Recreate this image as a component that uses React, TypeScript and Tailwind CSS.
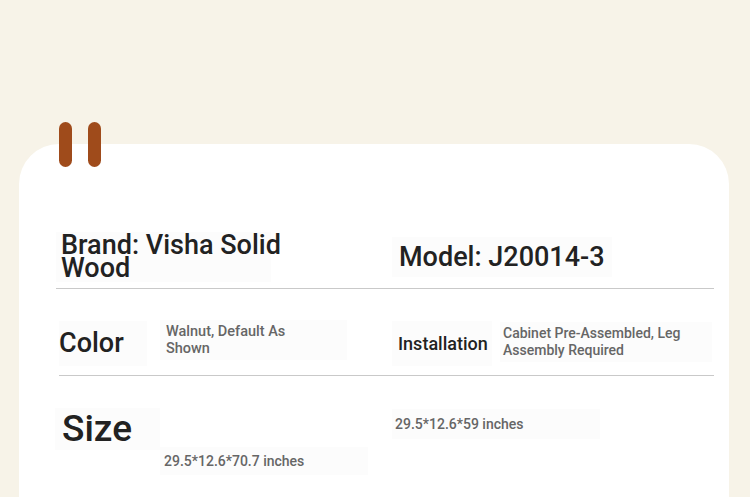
import React from "react";

const specs = {
  brand: "Brand: Visha Solid Wood",
  model: "Model: J20014-3",
  color: "Walnut, Default As Shown",
  installation: "Cabinet Pre-Assembled, Leg Assembly Required",
  sizes: ["29.5*12.6*70.7 inches", "29.5*12.6*59 inches"],
};

const App = () => {
  return (
    <div
      className="w-[750px] h-[497px] overflow-hidden bg-[#f7f3e8] pt-[144px] pl-[19px] pr-[21px]"
      style={{ fontFamily: "Roboto, 'Liberation Sans', sans-serif" }}
    >
      <div className="relative h-[380px] bg-white rounded-t-[40px] pt-[88px]">
        {/* binder tabs */}
        <div className="absolute -top-[22px] left-[40px] flex gap-[16px]">
          <span className="w-[13px] h-[45px] rounded-full bg-[#9f4b1b]" />
          <span className="w-[13px] h-[45px] rounded-full bg-[#9f4b1b]" />
        </div>

        {/* Brand / Model */}
        <div className="ml-[37px] mr-[15px] grid grid-cols-[336px_1fr] items-center border-b border-[#c9c9c9] pb-[6px]">
          <div className="w-[215px] bg-[#fcfcfc] pl-[5px] py-[2px]">
            <p className="w-[228px] text-[27px] leading-[23px] font-medium text-[#222]">{specs.brand}</p>
          </div>
          <div className="w-[220px] bg-[#fcfcfc] px-[7px] py-[6px]">
            <p className="text-[27px] leading-[28px] font-medium text-[#222]">{specs.model}</p>
          </div>
        </div>

        {/* Color / Installation */}
        <div className="ml-[40px] mr-[15px] h-[87px] pt-[22px] grid grid-cols-[333px_1fr] items-center border-b border-[#c9c9c9]">
          <div className="flex items-center gap-[13px]">
            <div className="w-[88px] h-[45px] flex items-center bg-[#fcfcfc]">
              <span className="text-[27px] font-medium text-[#222]">Color</span>
            </div>
            <div className="w-[187px] mb-[6px] bg-[#fcfcfc] px-[6px] py-[3px]">
              <p className="w-[140px] text-[14.5px] leading-[17px] font-medium text-[#666]">{specs.color}</p>
            </div>
          </div>
          <div className="flex items-center gap-[8px]">
            <div className="w-[100px] h-[45px] flex items-center bg-[#fcfcfc] px-[6px]">
              <span className="text-[18px] font-medium text-[#222]">Installation</span>
            </div>
            <div className="w-[212px] mb-[2px] bg-[#fcfcfc] px-[3px] py-[3px]">
              <p className="text-[14px] leading-[17px] font-medium text-[#666]">{specs.installation}</p>
            </div>
          </div>
        </div>

        {/* Size */}
        <div className="ml-[36px] mr-[15px] grid grid-cols-[337px_1fr] pt-[32px]">
          <div className="flex flex-col">
            <div className="w-[105px] h-[42px] flex items-center bg-[#fcfcfc] px-[7px]">
              <span className="text-[37px] font-medium text-[#222]">Size</span>
            </div>
            <div className="ml-[105px] w-[208px] h-[28px] -mt-[3px] flex items-center bg-[#fcfcfc] px-[4px]">
              <span className="text-[14px] font-medium text-[#666]">{specs.sizes[0]}</span>
            </div>
          </div>
          <div>
            <div className="w-[208px] h-[30px] mt-[1px] flex items-center bg-[#fcfcfc] px-[3px]">
              <span className="text-[14px] font-medium text-[#666]">{specs.sizes[1]}</span>
            </div>
          </div>
        </div>
      </div>
    </div>
  );
};

export default App;
